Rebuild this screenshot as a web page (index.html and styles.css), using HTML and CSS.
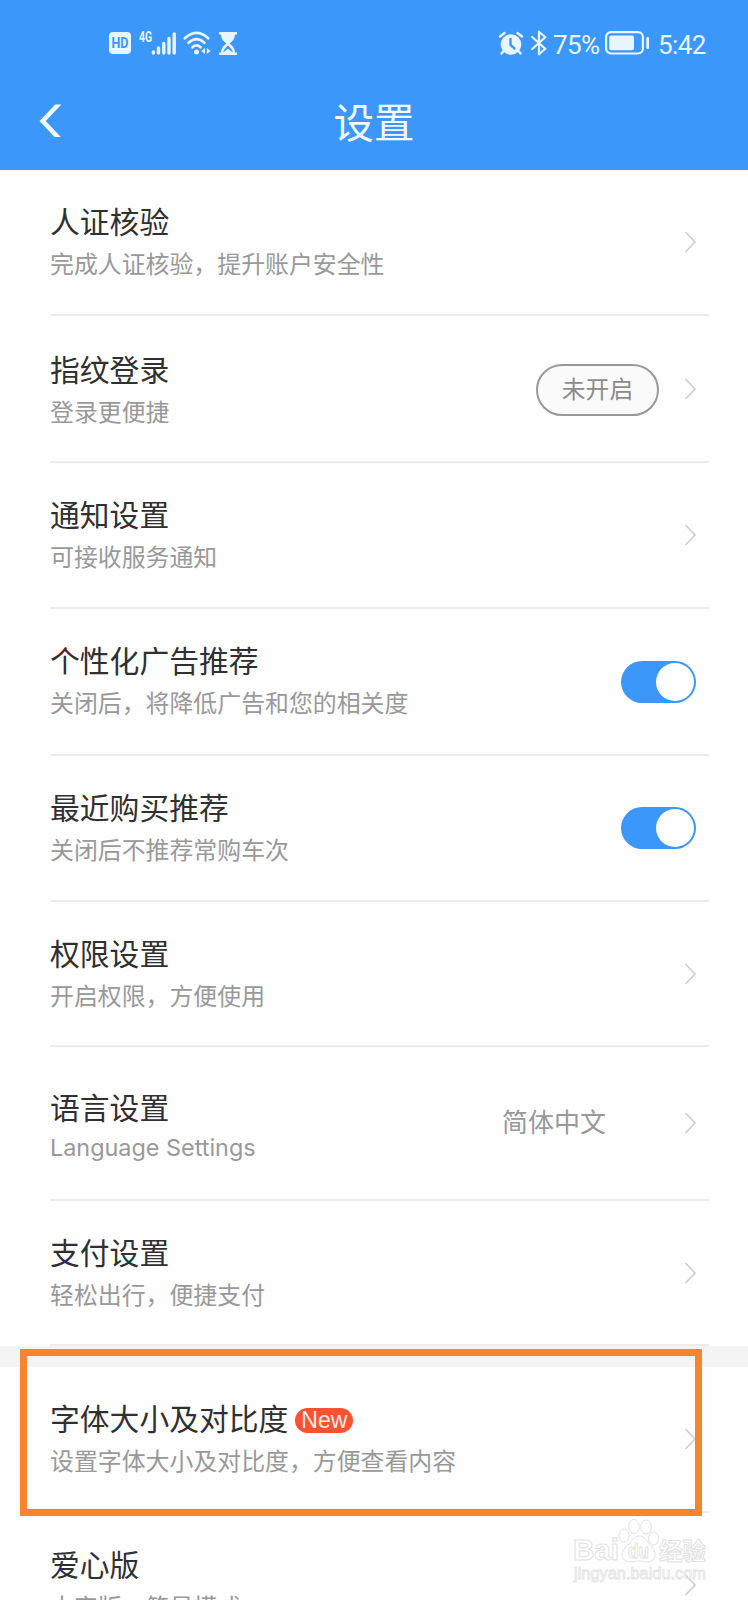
FILE: index.html
```html
<!DOCTYPE html>
<html lang="zh-CN">
<head>
  <meta charset="UTF-8">
  <meta name="viewport" content="width=device-width, initial-scale=1.0">
  <title>设置</title>
  <link rel="stylesheet" href="styles.css">
</head>
<body>
  <svg class="defs" width="0" height="0">
    <symbol id="chevron" viewBox="0 0 12 22">
      <path d="M1.500 1L11 11L1.500 21" fill="none" stroke="#d2d2d2" stroke-width="1.8"/>
    </symbol>
  </svg>

  <div class="page">
    <header class="header">
      <div class="status">
        <div class="status-left">
          <svg class="hd" width="22" height="22" viewBox="0 0 22 22">
            <rect width="22" height="22" rx="4" fill="#e9f5ff"/>
            <text x="11" y="16.2" text-anchor="middle" textLength="17" lengthAdjust="spacingAndGlyphs">HD</text>
          </svg>
          <svg class="signal" width="38" height="24" viewBox="0 0 38 24">
            <text x="1" y="11" textLength="13" lengthAdjust="spacingAndGlyphs">4G</text>
            <path d="M15.4 21v1M20.5 17v5M25.8 12.5v9.5M31 7.5V22M36.2 3v19" stroke="#e9f5ff" stroke-width="3.4" stroke-linecap="round"/>
          </svg>
          <svg class="wifi" width="28" height="24" viewBox="0 0 28 24">
            <g fill="none" stroke="#e9f5ff" stroke-width="2.7" stroke-linecap="round">
              <path d="M1.800 7.300Q13.500 -3.500 25.200 7.300"/>
              <path d="M5.600 11.800Q13.500 4.400 21.400 11.800"/>
              <path d="M9.500 16.200Q13.500 12.400 17.500 16.200"/>
            </g>
            <circle cx="13.500" cy="20.900" r="2.500" fill="#e9f5ff"/>
            <path d="M22 17v6l-3.800-3zM23.800 17v6l3.800-3z" fill="#e9f5ff"/>
          </svg>
          <svg class="hourglass" width="18" height="23" viewBox="0 0 18 23">
            <path d="M0 0H18V2.5H16C16 7 13 9.5 10.5 11.5C13 13.5 16 16 16 20.5H18V23H0V20.5H2C2 16 5 13.5 7.500 11.500C5 9.500 2 7 2 2.500H0Z" fill="#e9f5ff"/>
            <path d="M4.200 20.500C4.500 17.500 7 15.500 9 13.500C11 15.500 13.500 17.500 13.800 20.500L9 16.800Z" fill="#3c97fa"/>
          </svg>
        </div>
        <div class="status-right">
          <svg class="alarm" width="26" height="25" viewBox="0 0 26 25">
            <circle cx="13" cy="13.5" r="10.3" fill="#e9f5ff"/>
            <path d="M2 5.500L6.500 2M24 5.500L19.500 2M5.500 20L3.500 22.500M20.500 20L22.500 22.500" stroke="#e9f5ff" stroke-width="2.400" stroke-linecap="round"/>
            <path d="M12.500 8V14L16.500 17.500" fill="none" stroke="#3c97fa" stroke-width="2.400" stroke-linecap="round"/>
          </svg>
          <svg class="bluetooth" width="16" height="26" viewBox="0 0 16 26">
            <path d="M1.200 7L14.300 18.700L8 24.300V1.700L14.300 7.300L1.200 19" fill="none" stroke="#e9f5ff" stroke-width="2.200" stroke-linejoin="round" stroke-linecap="round"/>
          </svg>
          <span class="percent">75%</span>
          <svg class="battery" width="45" height="24" viewBox="0 0 45 24">
            <rect x="1.100" y="1.100" width="36.800" height="21.400" rx="5" fill="none" stroke="#e9f5ff" stroke-width="2.200"/>
            <rect x="4.200" y="4.400" width="24.800" height="14.800" rx="2" fill="#e9f5ff"/>
            <rect x="41.300" y="6" width="2.700" height="12" rx="1.200" fill="#e9f5ff"/>
          </svg>
          <span class="time">5:42</span>
        </div>
      </div>
      <div class="nav">
        <svg class="back" width="24" height="34" viewBox="0 0 24 34">
          <path d="M16.200 0.500H22.300L6.800 17L21.800 33H15.500L0.500 17Z" fill="#f2fbff"/>
        </svg>
        <h1>设置</h1>
      </div>
    </header>

    <main class="list">
      <div class="row">
        <div class="text">
          <div class="title">人证核验</div>
          <div class="sub">完成人证核验，提升账户安全性</div>
        </div>
        <svg class="arrow"><use href="#chevron"/></svg>
      </div>
      <div class="row tall fingerprint">
        <div class="text">
          <div class="title">指纹登录</div>
          <div class="sub">登录更便捷</div>
        </div>
        <span class="pill">未开启</span>
        <svg class="arrow"><use href="#chevron"/></svg>
      </div>
      <div class="row">
        <div class="text">
          <div class="title">通知设置</div>
          <div class="sub">可接收服务通知</div>
        </div>
        <svg class="arrow"><use href="#chevron"/></svg>
      </div>
      <div class="row tall ads">
        <div class="text">
          <div class="title">个性化广告推荐</div>
          <div class="sub">关闭后，将降低广告和您的相关度</div>
        </div>
        <span class="toggle"></span>
      </div>
      <div class="row">
        <div class="text">
          <div class="title">最近购买推荐</div>
          <div class="sub">关闭后不推荐常购车次</div>
        </div>
        <span class="toggle"></span>
      </div>
      <div class="row short">
        <div class="text">
          <div class="title">权限设置</div>
          <div class="sub">开启权限，方便使用</div>
        </div>
        <svg class="arrow"><use href="#chevron"/></svg>
      </div>
      <div class="row language">
        <div class="text">
          <div class="title">语言设置</div>
          <div class="sub latin">Language Settings</div>
        </div>
        <span class="value">简体中文</span>
        <svg class="arrow"><use href="#chevron"/></svg>
      </div>
      <div class="row short">
        <div class="text">
          <div class="title">支付设置</div>
          <div class="sub">轻松出行，便捷支付</div>
        </div>
        <svg class="arrow"><use href="#chevron"/></svg>
      </div>
      <div class="gap"></div>
      <div class="row">
        <div class="text">
          <div class="title">字体大小及对比度<span class="badge">New</span></div>
          <div class="sub">设置字体大小及对比度，方便查看内容</div>
        </div>
        <svg class="arrow"><use href="#chevron"/></svg>
      </div>
      <div class="row">
        <div class="text">
          <div class="title">爱心版</div>
          <div class="sub">大字版、简易模式</div>
        </div>
        <svg class="arrow"><use href="#chevron"/></svg>
      </div>
    </main>

    <!-- overlays -->
    <div class="highlight"></div>
    <svg class="watermark" width="140" height="72" viewBox="0 0 140 72">
      <g fill="#fff" stroke="#e2e2e2" stroke-width="1">
        <ellipse cx="55" cy="17.500" rx="5" ry="6.500"/>
        <ellipse cx="65" cy="8.500" rx="5.300" ry="7"/>
        <ellipse cx="77" cy="9" rx="5.300" ry="7"/>
        <ellipse cx="84.500" cy="20.500" rx="5" ry="6.500"/>
        <path d="M70 18C76 18 78 24 82 28C87 33 88 40 82 43C77 45 74 43 70 43C65 43 62 45 57 43C51 40 52 33 57 29C62 25 64 18 70 18Z"/>
        <text class="mark" x="4" y="42" font-size="30" textLength="46" lengthAdjust="spacingAndGlyphs">Bai</text>
        <text class="mark" x="59" y="40" font-size="20" textLength="21" lengthAdjust="spacingAndGlyphs">du</text>
        <text class="mark cjk" x="90" y="42" font-size="24" textLength="47" lengthAdjust="spacingAndGlyphs">经验</text>
      </g>
      <text class="mark url" x="5" y="61" font-size="17" textLength="132" lengthAdjust="spacingAndGlyphs">jingyan.baidu.com</text>
    </svg>
  </div>
</body>
</html>
```
FILE: styles.css
```css
* {
  box-sizing: border-box;
}
body {
  margin: 0;
  background: #fefefe;
  font-family: "Noto Sans CJK SC", sans-serif;
  color: #303030;
}
svg {
  overflow: visible;
}
.defs {
  position: absolute;
}
.page {
  position: relative;
  width: 748px;
  height: 1600px;
  overflow: hidden;
}

/* header */
.header {
  height: 170px;
  background: #3c97fa;
  color: #f2fbff;
}
.status {
  display: flex;
  justify-content: space-between;
  height: 86px;
  padding: 0 42px 0 109px;
  font-family: Roboto, sans-serif;
  color: #e9f5ff;
}
.status-left,
.status-right {
  display: flex;
  align-items: center;
}
.hd text {
  font: bold 14.5px Roboto, sans-serif;
  fill: #3c97fa;
}
.signal {
  margin-left: 7px;
}
.signal text {
  font: bold 15px Roboto, sans-serif;
  fill: #e9f5ff;
}
.wifi {
  margin-left: 7px;
}
.hourglass {
  margin-left: 8px;
}
.bluetooth {
  margin-left: 7px;
}
.percent,
.time {
  font-size: 26px;
  line-height: 30px;
  padding-top: 3px;
}
.percent {
  width: 51px;
  margin-left: 6px;
  letter-spacing: -0.6px;
}
.battery {
  margin-left: 1px;
}
.time {
  width: 48px;
  margin-left: 8px;
  letter-spacing: -0.6px;
}
.nav {
  display: flex;
  align-items: center;
  height: 70px;
  padding: 0 39px;
}
.nav h1 {
  flex: 1;
  margin: 0 24px 0 0;
  text-align: center;
  font-size: 40.5px;
  line-height: 60px;
  font-weight: 400;
}

/* settings list */
.row {
  display: flex;
  align-items: center;
  height: 146px;
  margin: 0 39px 0 50px;
  padding-right: 13px;
  border-bottom: 2px solid #ececec;
}
.row.tall {
  height: 147px;
}
.row.short {
  height: 145px;
}
.row.language {
  height: 154px;
}
.text {
  flex: 1;
}
.fingerprint .text {
  padding-top: 2px;
}
.ads .text {
  padding-bottom: 2px;
}
.language .text {
  padding-top: 8px;
}
.title {
  display: flex;
  align-items: center;
  font-size: 29.8px;
  line-height: 41px;
}
.sub {
  font-size: 23.9px;
  line-height: 43px;
  color: #999;
}
.sub.latin {
  font-family: Inter, sans-serif;
  font-size: 23.4px;
  line-height: 42px;
}
.arrow {
  width: 12px;
  height: 22px;
}
.pill {
  width: 123px;
  height: 52px;
  margin: 2px 25px 0 0;
  border: 2px solid #999;
  border-radius: 26px;
  background: #fafafa;
  color: #8c8c8c;
  font-size: 23.8px;
  line-height: 44px;
  text-align: center;
}
.value {
  margin: 0 78px 6px 0;
  color: #999;
  font-size: 26px;
}
.toggle {
  width: 75px;
  height: 42px;
  padding: 2px;
  border-radius: 21px;
  background: #3c97fa;
}
.toggle::after {
  content: "";
  display: block;
  width: 38px;
  height: 38px;
  margin-left: auto;
  border-radius: 50%;
  background: #fff;
}
.badge {
  width: 58px;
  height: 25px;
  margin: 6px 0 0 7px;
  border-radius: 13px;
  background: #fc5133;
  color: #ffe9e2;
  font: 23px/25px "Liberation Sans", sans-serif;
  text-align: center;
}
.gap {
  height: 21px;
  background: #f4f4f4;
}

.highlight {
  position: absolute;
  left: 20px;
  top: 1349px;
  width: 682px;
  height: 167px;
  border: 7px solid #fa842b;
}
.watermark {
  position: absolute;
  left: 569px;
  top: 1518px;
}
.mark {
  font-family: "Liberation Sans", sans-serif;
  font-weight: bold;
}
.mark.cjk {
  font-family: "Noto Sans CJK SC", sans-serif;
}
.mark.url {
  font-weight: normal;
  fill: #fff;
  stroke: #e2e2e2;
  stroke-width: 0.8;
}
```
